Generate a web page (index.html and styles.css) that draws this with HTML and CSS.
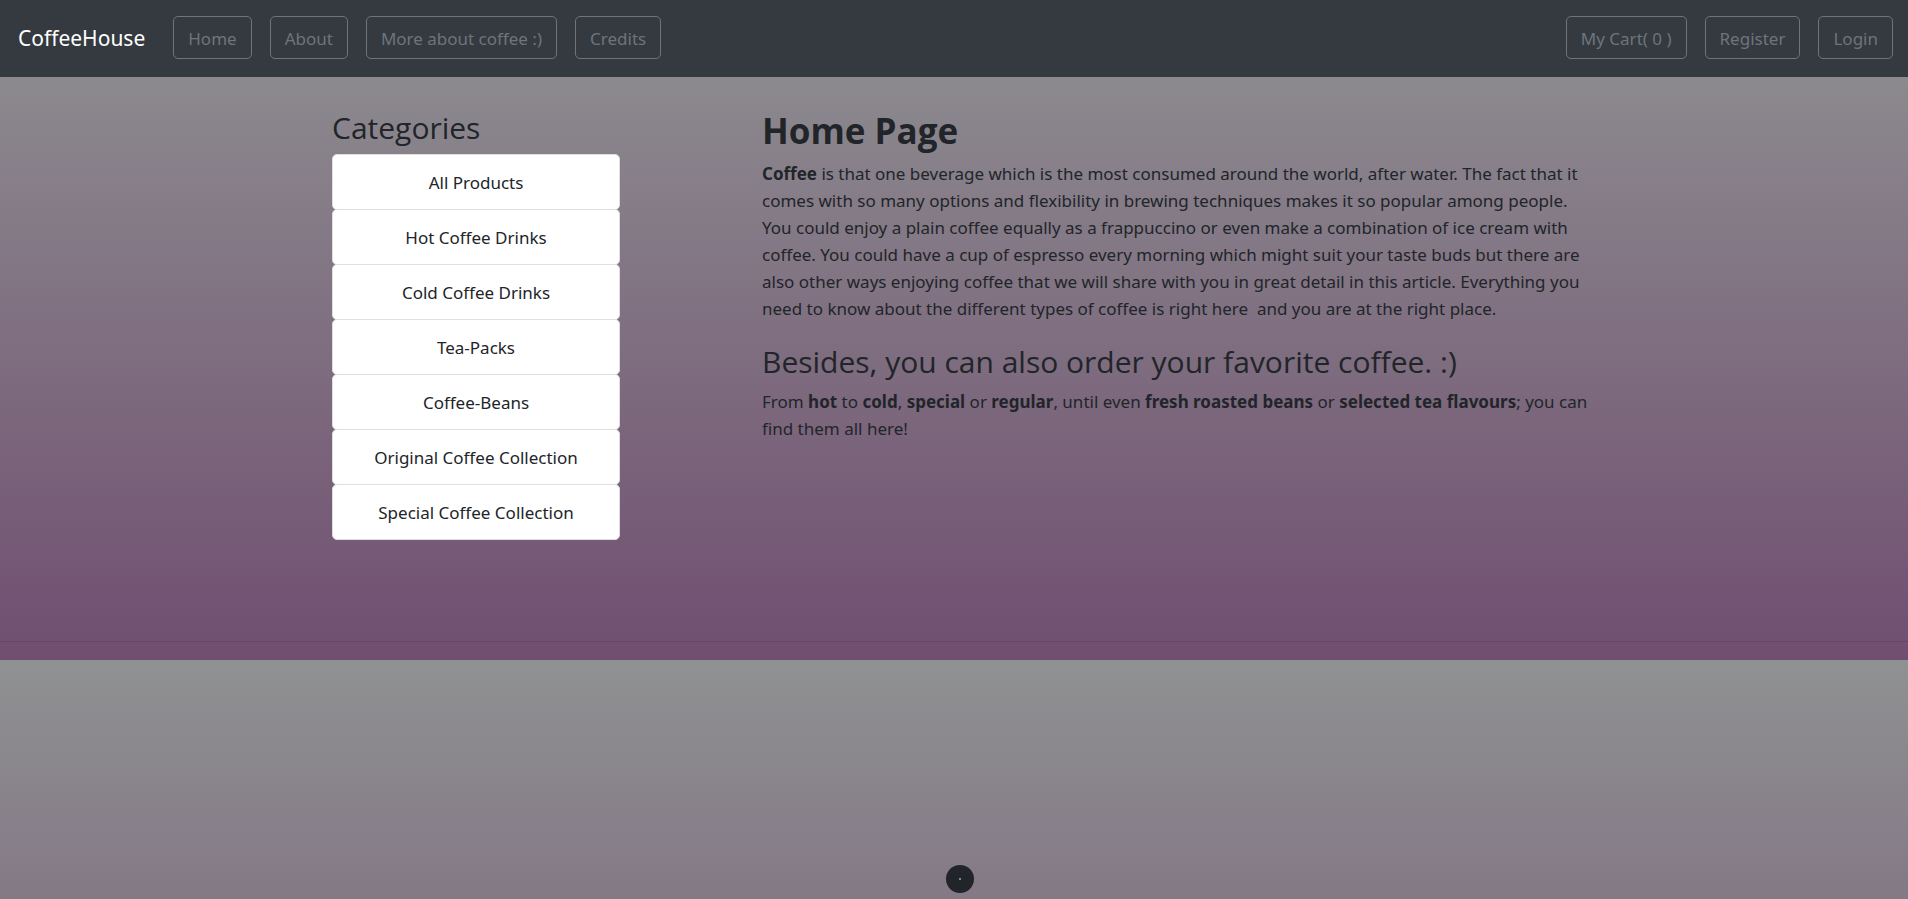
FILE: index.html
```html
<!DOCTYPE html>
<html lang="en">
<head>
<meta charset="utf-8">
<meta name="viewport" content="width=device-width, initial-scale=1">
<title>CoffeeHouse</title>
<link rel="stylesheet" href="styles.css">
</head>
<body>
<nav class="navbar">
  <a class="brand" href="#">CoffeeHouse</a>
  <a class="btn" href="#">Home</a>
  <a class="btn" href="#">About</a>
  <a class="btn" href="#">More about coffee :)</a>
  <a class="btn" href="#">Credits</a>
  <div class="account">
    <a class="btn" href="#">My Cart( 0 )</a>
    <a class="btn" href="#">Register</a>
    <a class="btn" href="#">Login</a>
  </div>
</nav>
<main class="container">
  <aside>
    <h2>Categories</h2>
    <ul class="list">
      <li><a href="#">All Products</a></li>
      <li><a href="#">Hot Coffee Drinks</a></li>
      <li><a href="#">Cold Coffee Drinks</a></li>
      <li><a href="#">Tea-Packs</a></li>
      <li><a href="#">Coffee-Beans</a></li>
      <li><a href="#">Original Coffee Collection</a></li>
      <li><a href="#">Special Coffee Collection</a></li>
    </ul>
  </aside>
  <section>
    <h1>Home Page</h1>
    <p><b>Coffee</b> is that one beverage which is the most consumed around the world, after water. The fact that it comes with so many options and flexibility in brewing techniques makes it so popular among people. You could enjoy a plain coffee equally as a frappuccino or even make a combination of ice cream with coffee. You could have a cup of espresso every morning which might suit your taste buds but there are also other ways enjoying coffee that we will share with you in great detail in this article. Everything you need to know about the different types of coffee is right here&nbsp; and you are at the right place.</p>
    <h2>Besides, you can also order your favorite coffee. :)</h2>
    <p>From <b>hot</b> to <b>cold</b>, <b>special</b> or <b>regular</b>, until even <b>fresh roasted beans</b> or <b>selected tea flavours</b>; you can find them all here!</p>
  </section>
</main>
<hr class="divider">
<a class="to-top" href="#" aria-label="Back to top"><span class="dot"></span></a>
</body>
</html>
```
FILE: styles.css
```css
* { box-sizing: border-box; }

body {
  margin: 0;
  font: 17px/27px "Segoe UI", "Noto Sans", "Open Sans", sans-serif;
  color: #212529;
  background: linear-gradient(#8f9192, #704e70);
}

a { color: inherit; text-decoration: none; }

.navbar {
  display: flex;
  flex-wrap: wrap;
  align-items: flex-start;
  gap: 18px;
  padding: 16px 15px 18px 18px;
  background: #343a40;
}

.brand {
  margin-right: 10px;
  padding: 5px 0 3px;
  font-size: 21px;
  line-height: 35px;
  color: #fff;
}

.btn {
  padding: 8px 14px 6px;
  border: 1px solid #6c757d;
  border-radius: 5px;
  color: #6c757d;
}

.account {
  display: flex;
  gap: 18px;
  margin-left: auto;
}

.container {
  display: grid;
  grid-template-columns: 288px 1fr;
  gap: 142px;
  width: 100%;
  max-width: 1276px;
  margin: 0 auto;
  padding: 31px 0 101px 16px;
}

h1, h2, p { margin: 0; }
h1, h2 { font-family: "Segoe UI", "Open Sans", "Noto Sans", sans-serif; }
h1 { font-size: 35px; line-height: 46px; margin-bottom: 6px; }
h2 { font-size: 30px; line-height: 39px; font-weight: 400; margin-bottom: 7px; }
p { margin-bottom: 20px; }

.list { margin: 0; padding: 0; list-style: none; text-align: center; }
.list li + li { margin-top: -1px; }
.list a {
  display: block;
  padding: 14px 20px 13px;
  background: #fff;
  border: 1px solid #dfdfdf;
  border-radius: 5px;
}

.divider {
  margin: 0 0 18px;
  border: 0;
  border-top: 1px solid rgba(0, 0, 0, 0.1);
}

.to-top {
  position: fixed;
  bottom: 6px;
  left: calc(50% - 8px);
  display: grid;
  place-items: center;
  width: 28px;
  height: 28px;
  border-radius: 50%;
  background: #212529;
}

.dot { width: 2px; height: 2px; background: #85888b; }
```
